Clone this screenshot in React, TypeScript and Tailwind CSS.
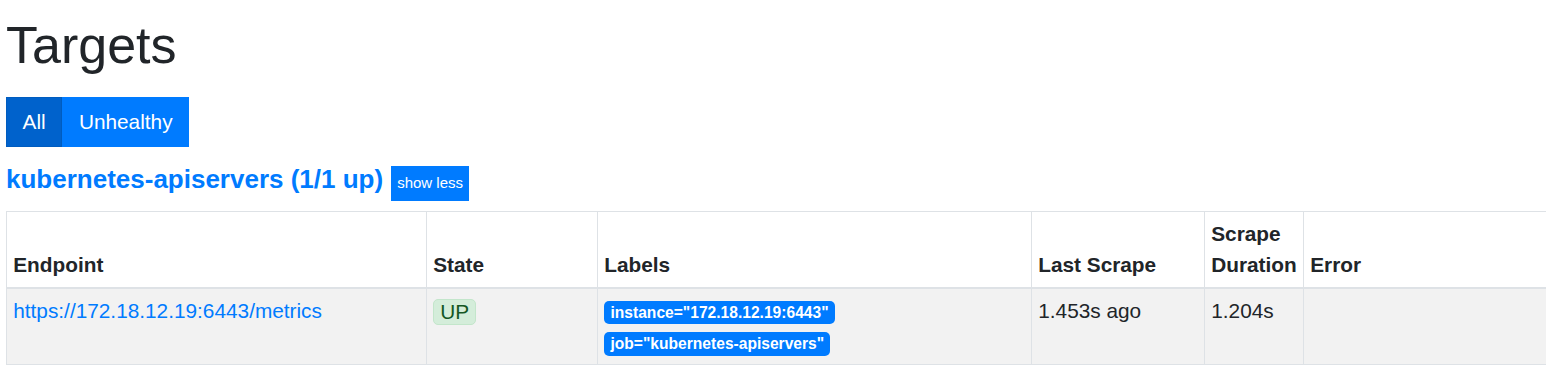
import React from "react";

const labels = ['instance="172.18.12.19:6443"', 'job="kubernetes-apiservers"'];

function App() {
  return (
    <div
      className="w-[1546px] h-[376px] overflow-hidden bg-white text-[#212529] pl-[6px]"
      style={{ fontFamily: '"Liberation Sans", Arial, sans-serif' }}
    >
      <h1 className="pt-[14px] text-[52px] leading-[62.4px] font-normal">Targets</h1>
      <div className="mt-[20.6px] flex">
        <button className="h-[50px] px-[15.6px] text-[20.8px] text-white bg-[#0062cc] border border-[#005cbf]">
          All
        </button>
        <button className="h-[50px] px-[15.6px] text-[20.8px] text-white bg-[#007bff] border border-[#007bff]">
          Unhealthy
        </button>
      </div>
      <div className="mt-[15px] flex items-baseline gap-[8px]">
        <a className="text-[26px] font-bold text-[#007bff] leading-[35px]">
          kubernetes-apiservers (1/1 up)
        </a>
        <button className="h-[35px] px-[6px] text-[15px] text-white bg-[#007bff]">show less</button>
      </div>
      <table className="mt-[10px] w-[1545px] table-fixed border-collapse text-[20.8px] leading-[31.2px]">
        <thead>
          <tr className="font-bold text-left align-bottom">
            <th className="w-[420px] border border-[#dee2e6] border-b-2 p-[6.24px]">Endpoint</th>
            <th className="w-[171px] border border-[#dee2e6] border-b-2 p-[6.24px]">State</th>
            <th className="w-[434px] border border-[#dee2e6] border-b-2 p-[6.24px]">Labels</th>
            <th className="w-[173px] border border-[#dee2e6] border-b-2 p-[6.24px]">Last Scrape</th>
            <th className="w-[99px] border border-[#dee2e6] border-b-2 p-[6.24px]">Scrape Duration</th>
            <th className="border border-[#dee2e6] border-b-2 p-[6.24px]">Error</th>
          </tr>
        </thead>
        <tbody>
          <tr className="bg-[#f2f2f2] align-top">
            <td className="border border-[#dee2e6] p-[6.24px]">
              <a className="text-[#007bff]">https://172.18.12.19:6443/metrics</a>
            </td>
            <td className="border border-[#dee2e6] p-[6.24px]">
              <span className="inline-block mt-[4px] px-[6px] leading-[24px] rounded-[5px] bg-[#d4edda] border border-[#c3e6cb] text-[#155724]">
                UP
              </span>
            </td>
            <td className="border border-[#dee2e6] p-[6.24px]">
              {labels.map((l) => (
                <div key={l}>
                  <span className="inline-block px-[6.24px] py-[3.9px] text-[15.6px] leading-none font-bold text-white bg-[#007bff] rounded-[5px]">
                    {l}
                  </span>
                </div>
              ))}
            </td>
            <td className="border border-[#dee2e6] p-[6.24px]">1.453s ago</td>
            <td className="border border-[#dee2e6] p-[6.24px]">1.204s</td>
            <td className="border border-[#dee2e6] p-[6.24px]"></td>
          </tr>
        </tbody>
      </table>
    </div>
  );
}

export default App;
